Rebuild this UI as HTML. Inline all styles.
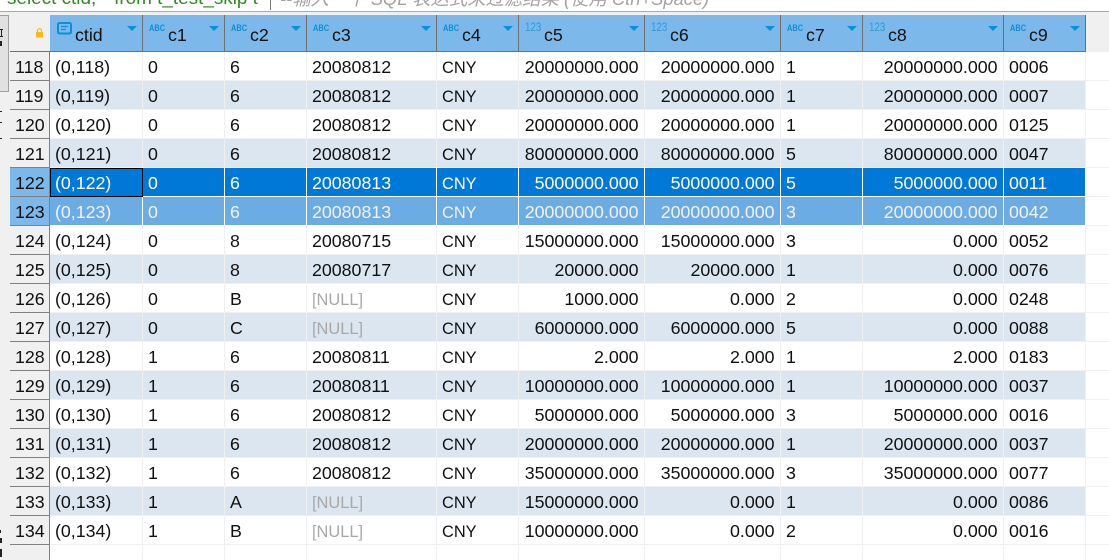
<!DOCTYPE html>
<html>
<head>
<meta charset="utf-8">
<style>
html,body{margin:0;padding:0;width:1109px;height:560px;overflow:hidden;background:#fff}
body{position:relative;font-family:"Liberation Sans","Noto Sans CJK SC",sans-serif;color:#111}
.abs{position:absolute}
#sql{left:7px;top:-11px;font-size:18.9px;line-height:20px;white-space:pre;color:#2e8b1e}
#hint{left:280px;top:-11px;font-size:18.35px;line-height:20px;white-space:pre;color:#a4a4a4;font-style:italic}
#cur{left:270px;top:0;width:1px;height:10px;background:#777}
#topline{left:0;top:11px;width:1109px;height:1px;background:#aaa}
#band{left:0;top:12px;width:1109px;height:40px;background:#f0f0f0}
#side{left:0;top:52px;width:10px;height:508px;background:#f0f0f0}
#tool{left:-1px;top:15px;width:8px;height:75px;background:#e1e1e1;border:1px solid #a0a0a0}
.k{background:#222}
#hd{left:50px;top:15px;width:1036px;height:36px;background:#7cb8ea}
#hline{left:10px;top:51px;width:1076px;height:1px;background:#707070}
.c{position:absolute;top:0;height:36px;border-right:1px solid #6f6f6f;box-sizing:border-box}
.c .n{position:absolute;left:25px;top:10px;font-size:17.8px;line-height:20px;color:#111}
.c .i{position:absolute;left:6px;top:8px;color:#0c8fd6;font-size:9.5px;line-height:11px;font-weight:bold;transform:scaleX(.78);transform-origin:left center}
.c .d{position:absolute;left:6px;top:7px;color:#2a9ad8;font-size:11.5px;line-height:13px;transform:scaleX(.85);transform-origin:left center}
.c .t{position:absolute;right:5px;top:11px;width:0;height:0;border-left:5px solid transparent;border-right:5px solid transparent;border-top:5px solid #0c8fd6}
table{position:absolute;left:10px;top:52px;border-collapse:separate;border-spacing:0;table-layout:fixed;width:1076px}
td{box-sizing:border-box;height:29px;padding:3px 0 0 5px;border-right:1px solid #f0f0f0;border-bottom:1px solid #f0f0f0;font-size:17.8px;line-height:25px;white-space:nowrap;overflow:hidden;color:#111}
td:first-child{background:#f0f0f0;border-bottom:1px solid #808080;border-right:1px solid #808080;padding:3px 0 0 5px}
td.r{text-align:right;padding-left:0;padding-right:5.5px}
td.y{font-size:16.4px;padding-top:4px;line-height:24px}
tr:nth-child(even) td:not(:first-child){background:#dce6f1}
td.nl{color:#a8a8a8;font-size:16.4px;padding-top:4px;line-height:24px}
tr.s1 td:not(:first-child){background:#0078d7!important;color:#fff;border-color:#fff}
tr.s2 td:not(:first-child){background:#6cace4!important;color:#f2f2f2;border-color:#fff}
tr.s1 td:first-child,tr.s2 td:first-child{background:#7cb8ea}
tr.s1 td.f{outline:1px solid #000;outline-offset:-1px}
#rgrid{left:1086px;top:52px;width:23px;height:508px;background:repeating-linear-gradient(#fff 0 28px,#f0f0f0 28px 29px)}
</style>
</head>
<body>
<div class="abs" id="sql">select ctid, * from t_test_skip t</div>
<div class="abs" id="cur"></div>
<div class="abs" id="hint">--输入一个 SQL 表达式来过滤结果 (使用 Ctrl+Space)</div>
<div class="abs" id="band"></div>
<div class="abs" id="topline"></div>
<div class="abs" id="side"></div>
<div class="abs" id="tool"></div>
<div class="abs k" style="left:0;top:29px;width:3px;height:1px"></div>
<div class="abs k" style="left:1px;top:29px;width:1px;height:7px"></div>
<div class="abs k" style="left:0;top:36px;width:3px;height:1px"></div>
<div class="abs k" style="left:0;top:41px;width:2px;height:5px"></div>
<div class="abs k" style="left:0;top:111px;width:2px;height:1px"></div>
<div class="abs k" style="left:0;top:122px;width:2px;height:1px"></div>
<div class="abs k" style="left:0;top:138px;width:2px;height:1px"></div>
<div class="abs k" style="left:0;top:530px;width:1px;height:3px"></div>
<div class="abs k" style="left:0;top:538px;width:2px;height:5px"></div>
<div class="abs" style="left:0;top:549px;width:2px;height:8px;border:1px solid #222;box-sizing:border-box"></div>
<svg class="abs" style="left:35px;top:28px" width="9" height="10" viewBox="0 0 9 10"><path d="M2.5 4V2.6a2 2 0 0 1 4 0V4" fill="none" stroke="#fdb813" stroke-width="1.2"/><rect x="1" y="4" width="7" height="5.5" fill="#fdb813"/></svg>
<div class="abs" id="hd">
<div class="c" style="left:0;width:93px"><svg class="abs" style="left:7px;top:7px" width="15" height="13" viewBox="0 0 15 13"><rect x="1" y="1" width="13" height="10.5" rx="1.5" fill="none" stroke="#0c8fd6" stroke-width="2"/><path d="M4 4.5H11M4 7.5H9" stroke="#0c8fd6" stroke-width="1.3"/></svg><span class="n">ctid</span><span class="t"></span></div>
<div class="c" style="left:93px;width:82px"><span class="i">ABC</span><span class="n">c1</span><span class="t"></span></div>
<div class="c" style="left:175px;width:82px"><span class="i">ABC</span><span class="n">c2</span><span class="t"></span></div>
<div class="c" style="left:257px;width:130px"><span class="i">ABC</span><span class="n">c3</span><span class="t"></span></div>
<div class="c" style="left:387px;width:82px"><span class="i">ABC</span><span class="n">c4</span><span class="t"></span></div>
<div class="c" style="left:469px;width:126px"><span class="d">123</span><span class="n">c5</span><span class="t"></span></div>
<div class="c" style="left:595px;width:136px"><span class="d">123</span><span class="n">c6</span><span class="t"></span></div>
<div class="c" style="left:731px;width:82px"><span class="i">ABC</span><span class="n">c7</span><span class="t"></span></div>
<div class="c" style="left:813px;width:141px"><span class="d">123</span><span class="n">c8</span><span class="t"></span></div>
<div class="c" style="left:954px;width:82px"><span class="i">ABC</span><span class="n">c9</span><span class="t"></span></div>
</div>
<div class="abs" id="hline"></div>
<div class="abs" id="rgrid"></div>
<table>
<colgroup><col style="width:40px"><col style="width:93px"><col style="width:82px"><col style="width:82px"><col style="width:130px"><col style="width:82px"><col style="width:126px"><col style="width:136px"><col style="width:82px"><col style="width:141px"><col style="width:82px"></colgroup>
<tr><td>118</td><td>(0,118)</td><td>0</td><td>6</td><td>20080812</td><td class="y">CNY</td><td class="r">20000000.000</td><td class="r">20000000.000</td><td>1</td><td class="r">20000000.000</td><td>0006</td></tr>
<tr><td>119</td><td>(0,119)</td><td>0</td><td>6</td><td>20080812</td><td class="y">CNY</td><td class="r">20000000.000</td><td class="r">20000000.000</td><td>1</td><td class="r">20000000.000</td><td>0007</td></tr>
<tr><td>120</td><td>(0,120)</td><td>0</td><td>6</td><td>20080812</td><td class="y">CNY</td><td class="r">20000000.000</td><td class="r">20000000.000</td><td>1</td><td class="r">20000000.000</td><td>0125</td></tr>
<tr><td>121</td><td>(0,121)</td><td>0</td><td>6</td><td>20080812</td><td class="y">CNY</td><td class="r">80000000.000</td><td class="r">80000000.000</td><td>5</td><td class="r">80000000.000</td><td>0047</td></tr>
<tr class="s1"><td>122</td><td class="f">(0,122)</td><td>0</td><td>6</td><td>20080813</td><td class="y">CNY</td><td class="r">5000000.000</td><td class="r">5000000.000</td><td>5</td><td class="r">5000000.000</td><td>0011</td></tr>
<tr class="s2"><td>123</td><td>(0,123)</td><td>0</td><td>6</td><td>20080813</td><td class="y">CNY</td><td class="r">20000000.000</td><td class="r">20000000.000</td><td>3</td><td class="r">20000000.000</td><td>0042</td></tr>
<tr><td>124</td><td>(0,124)</td><td>0</td><td>8</td><td>20080715</td><td class="y">CNY</td><td class="r">15000000.000</td><td class="r">15000000.000</td><td>3</td><td class="r">0.000</td><td>0052</td></tr>
<tr><td>125</td><td>(0,125)</td><td>0</td><td>8</td><td>20080717</td><td class="y">CNY</td><td class="r">20000.000</td><td class="r">20000.000</td><td>1</td><td class="r">0.000</td><td>0076</td></tr>
<tr><td>126</td><td>(0,126)</td><td>0</td><td>B</td><td class="nl">[NULL]</td><td class="y">CNY</td><td class="r">1000.000</td><td class="r">0.000</td><td>2</td><td class="r">0.000</td><td>0248</td></tr>
<tr><td>127</td><td>(0,127)</td><td>0</td><td>C</td><td class="nl">[NULL]</td><td class="y">CNY</td><td class="r">6000000.000</td><td class="r">6000000.000</td><td>5</td><td class="r">0.000</td><td>0088</td></tr>
<tr><td>128</td><td>(0,128)</td><td>1</td><td>6</td><td>20080811</td><td class="y">CNY</td><td class="r">2.000</td><td class="r">2.000</td><td>1</td><td class="r">2.000</td><td>0183</td></tr>
<tr><td>129</td><td>(0,129)</td><td>1</td><td>6</td><td>20080811</td><td class="y">CNY</td><td class="r">10000000.000</td><td class="r">10000000.000</td><td>1</td><td class="r">10000000.000</td><td>0037</td></tr>
<tr><td>130</td><td>(0,130)</td><td>1</td><td>6</td><td>20080812</td><td class="y">CNY</td><td class="r">5000000.000</td><td class="r">5000000.000</td><td>3</td><td class="r">5000000.000</td><td>0016</td></tr>
<tr><td>131</td><td>(0,131)</td><td>1</td><td>6</td><td>20080812</td><td class="y">CNY</td><td class="r">20000000.000</td><td class="r">20000000.000</td><td>1</td><td class="r">20000000.000</td><td>0037</td></tr>
<tr><td>132</td><td>(0,132)</td><td>1</td><td>6</td><td>20080812</td><td class="y">CNY</td><td class="r">35000000.000</td><td class="r">35000000.000</td><td>3</td><td class="r">35000000.000</td><td>0077</td></tr>
<tr><td>133</td><td>(0,133)</td><td>1</td><td>A</td><td class="nl">[NULL]</td><td class="y">CNY</td><td class="r">15000000.000</td><td class="r">0.000</td><td>1</td><td class="r">0.000</td><td>0086</td></tr>
<tr style="background:#fff"><td>134</td><td>(0,134)</td><td>1</td><td>B</td><td class="nl">[NULL]</td><td class="y">CNY</td><td class="r">10000000.000</td><td class="r">0.000</td><td>2</td><td class="r">0.000</td><td>0016</td></tr>
<tr class="e"><td style="border-bottom:0"></td><td style="background:#fff!important"></td><td style="background:#fff!important"></td><td style="background:#fff!important"></td><td style="background:#fff!important"></td><td style="background:#fff!important"></td><td style="background:#fff!important"></td><td style="background:#fff!important"></td><td style="background:#fff!important"></td><td style="background:#fff!important"></td><td style="background:#fff!important"></td></tr>
</table>
</body>
</html>
